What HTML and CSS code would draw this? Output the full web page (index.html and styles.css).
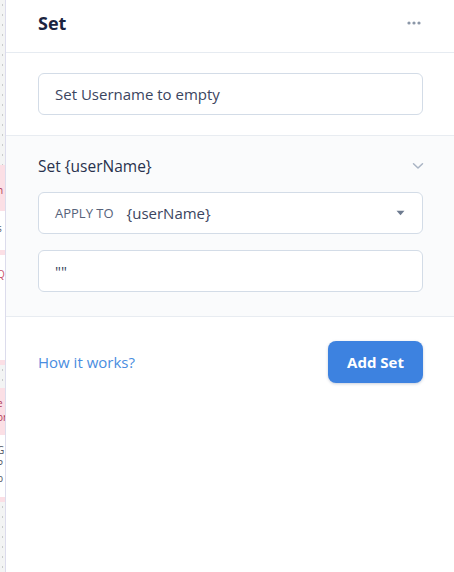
FILE: index.html
```html
<!DOCTYPE html>
<html>
<head>
<meta charset="utf-8">
<link rel="stylesheet" href="styles.css">
</head>
<body>
<div class="app">
  <div class="backdrop">
    <div class="bg-grid b1"></div>
    <div class="bg-pink b2"><span>l</span><span>n</span></div>
    <div class="bg-white b3"><span>s</span></div>
    <div class="bg-pinkline"></div>
    <div class="bg-white b4"><span class="red">Q</span></div>
    <div class="bg-pinkline"></div>
    <div class="bg-grid b5"></div>
    <div class="bg-pink b6"><span>e</span><span>or</span></div>
    <div class="bg-white b7"><span>G</span><span>P</span><span>b</span></div>
    <div class="bg-pinkline"></div>
    <div class="bg-grid b8"></div>
  </div>
  <div class="panel">
    <div class="header">
      <h1 class="title">Set</h1>
      <svg class="dots" width="14" height="4" viewBox="0 0 14 4"><circle cx="2" cy="2" r="1.6"/><circle cx="7" cy="2" r="1.6"/><circle cx="12" cy="2" r="1.6"/></svg>
    </div>
    <div class="section">
      <div class="field">Set Username to empty</div>
    </div>
    <div class="section gray">
      <div class="sec-title">
        <span>Set {userName}</span>
        <svg class="chev" width="12" height="8" viewBox="0 0 12 8"><path d="M1.5 1.8 L6 6 L10.5 1.8" fill="none" stroke="#a9b4c4" stroke-width="1.5" stroke-linecap="round" stroke-linejoin="round"/></svg>
      </div>
      <div class="field select">
        <span class="label">APPLY TO</span>
        <span class="value">{userName}</span>
        <svg class="caret" width="9" height="6" viewBox="0 0 9 6"><path d="M0.5 0.8 H8.5 L4.5 5.2 Z" fill="#6e7b90"/></svg>
      </div>
      <div class="field">""</div>
    </div>
    <div class="footer">
      <a class="link">How it works?</a>
      <button class="btn">Add Set</button>
    </div>
  </div>
</div>
</body>
</html>
```
FILE: styles.css
```css
html, body {
  margin: 0;
  padding: 0;
  height: 100%;
  background: #ffffff;
  font-family: "Open Sans", "Noto Sans", sans-serif;
}
.app {
  display: flex;
  height: 572px;
}
.backdrop {
  width: 5px;
  overflow: hidden;
  display: flex;
  flex-direction: column;
  border-right: 1px solid #dcdcec;
  font-size: 10px;
  line-height: 14px;
  color: #b03a58;
}
.backdrop span {
  display: block;
  margin-left: -3px;
}
.bg-grid {
  background: #f3f4f4;
  background-image: radial-gradient(circle, #c9cccc 0.6px, transparent 0.8px);
  background-size: 5px 10px;
}
.b1 { height: 165px; }
.bg-pink { background: #fbdfe5; }
.b2 { height: 46px; padding-top: 4px; box-sizing: border-box; }
.bg-white { background: #ffffff; color: #555a66; }
.b3 { height: 39px; padding-top: 10px; box-sizing: border-box; }
.bg-pinkline { height: 5px; background: #fbdfe5; }
.b4 { height: 105px; padding-top: 12px; box-sizing: border-box; }
.b4 .red { color: #c8506a; }
.b5 { height: 23px; }
.b6 { height: 47px; padding-top: 8px; box-sizing: border-box; }
.b7 { height: 62px; padding-top: 8px; box-sizing: border-box; }
.b8 { flex: 1; }

.panel {
  flex: 1;
  display: flex;
  flex-direction: column;
  background: #ffffff;
}
.header {
  height: 52px;
  padding: 0 33px 0 32px;
  display: flex;
  align-items: center;
  justify-content: space-between;
  border-bottom: 1px solid #e6ebf1;
}
.title {
  margin: 0;
  font-size: 18px;
  font-weight: 700;
  color: #1b2440;
  line-height: 24px;
  margin-top: -6px;
}
.dots {
  fill: #8b97a8;
  margin-top: -6px;
}
.section {
  padding: 20px 31px 20px 32px;
  border-bottom: 1px solid #e8ecf1;
}
.section.gray {
  background: #fafbfc;
  padding-bottom: 24px;
  display: flex;
  flex-direction: column;
  gap: 16px;
}
.field {
  height: 42px;
  box-sizing: border-box;
  border: 1px solid #d3dce7;
  border-radius: 6px;
  background: #ffffff;
  padding: 0 16px;
  display: flex;
  align-items: center;
  font-size: 15px;
  color: #3b4560;
}
.sec-title {
  height: 20px;
  display: flex;
  align-items: center;
  justify-content: space-between;
  font-size: 15.5px;
  font-weight: 500;
  color: #28324d;
}
.chev {
  margin-right: -1px;
}
.select .label {
  font-size: 13px;
  color: #56627a;
  margin-right: 13px;
}
.select .value {
  flex: 1;
  color: #3b4560;
}
.caret {
  margin-right: 1px;
}
.footer {
  padding: 24px 31px 0 32px;
  display: flex;
  justify-content: space-between;
  align-items: center;
}
.link {
  font-size: 15px;
  color: #4a8de0;
}
.btn {
  height: 42px;
  width: 95px;
  border: none;
  border-radius: 8px;
  background: #3d82e0;
  color: #ffffff;
  font-family: "Open Sans", "Noto Sans", sans-serif;
  font-size: 15px;
  font-weight: 700;
  box-shadow: 0 1px 3px rgba(30, 60, 110, 0.25);
}
```
